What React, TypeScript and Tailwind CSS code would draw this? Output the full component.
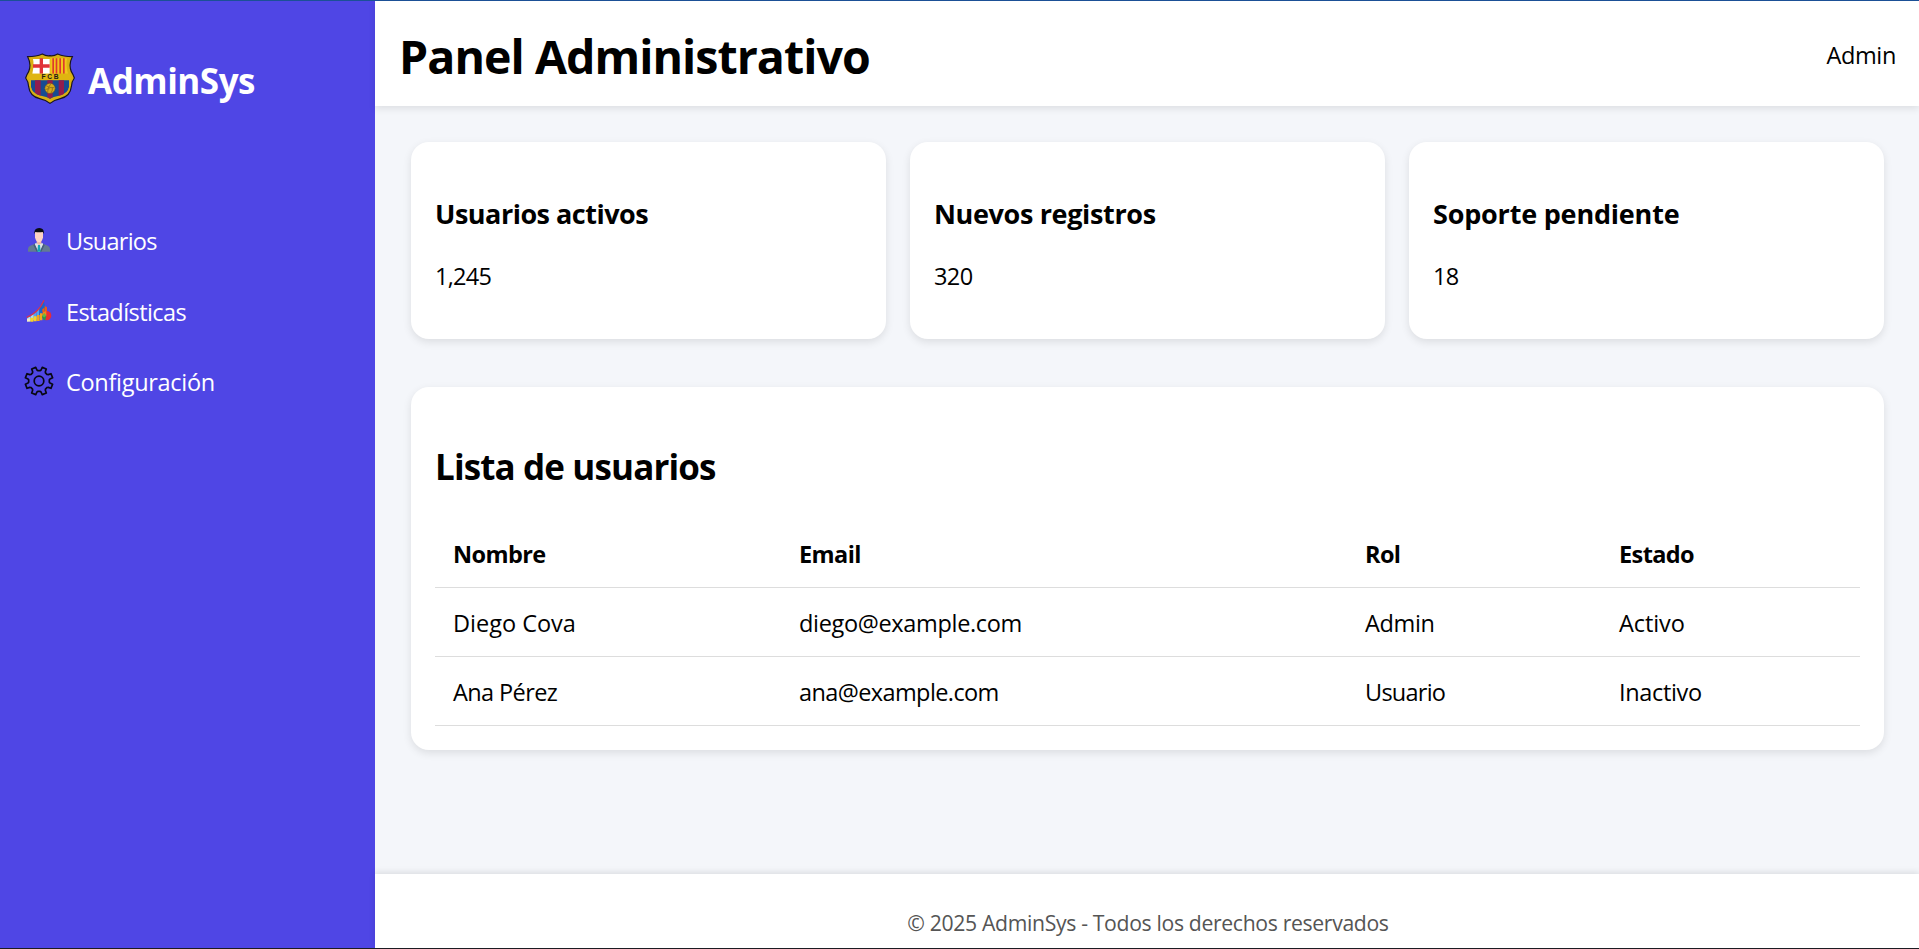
import type { ReactNode } from "react";

function Crest() {
  return (
    <svg viewBox="30 26 150 153" className="h-[51px] w-[50px] shrink-0">
      <defs>
        <clipPath id="crest-body">
          <path d="M48 43 Q66 42 83 35 Q94 42 105 41 Q116 42 127 35 Q144 42 162 43 Q153 62 163 84 Q170 92 172 101 Q164 112 163 126 Q160 151 132 158 Q115 162 105 170 Q95 162 78 158 Q50 151 47 126 Q46 112 38 101 Q40 92 47 84 Q57 62 48 43Z" />
        </clipPath>
      </defs>
      <path
        d="M38 37 Q64 37 82 29 Q94 36 105 34 Q116 36 128 29 Q146 37 172 37 Q160 60 169 82 Q175 91 178 101 Q169 113 169 127 Q166 156 136 163 Q117 167 105 177 Q93 167 74 163 Q44 156 41 127 Q41 113 32 101 Q35 91 41 82 Q50 60 38 37Z"
        fill="#d9b012"
        stroke="#1a1522"
        strokeWidth="3.5"
      />
      <g clipPath="url(#crest-body)">
        <path d="M54 44 H104 V88 H52 Q58 62 54 44Z" fill="#ffffff" />
        <path d="M74 42h10v46H74z M54 60h50v10H54z" fill="#e03238" />
        <path d="M106 42h50q-4 22 3 46h-53z" fill="#f2c51c" />
        <path d="M112 42h5v46h-5z M122 42h5v46h-5z M133 42h5v46h-5z M144 42h5v46h-5z" fill="#de3a2c" />
        <path d="M48 108h114v20q-3 20-30 26-18 3-27 9-9-6-27-9-27-6-30-26z" fill="#174b93" />
        <path d="M60 108h17v46q-12-3-17-9z M97 108h16v50l-8 5-8-5z M131 108h16v40q-5 4-16 6z" fill="#931c4d" />
      </g>
      <path d="M47 88H163L170 101 164 107H46L40 101Z" fill="#dfb510" />
      <text x="107.500" y="105" textAnchor="middle" fontSize="20" fontWeight="700" letterSpacing="5" fill="#1b1a18" className="font-['Liberation_Sans',sans-serif]">
        FCB
      </text>
      <circle cx="105" cy="132" r="15.500" fill="#d7a91b" stroke="#5b4a25" strokeWidth="1.500" />
      <path d="M93 124q10 8 24 6 M98 144q-1-14 9-25 M108 146q6-9 4-16 M92 135l12-2" fill="none" stroke="#7e6016" strokeWidth="2" />
    </svg>
  );
}

function PersonIcon() {
  return (
    <svg viewBox="27 30 90 90" className="size-[30px] shrink-0">
      <path d="M39 110V103q0-9 10-12l15-6h16l15 6q10 3 10 12v7z" fill="#637b93" />
      <path d="M61 85h22l3 5-11 20h-6L58 90z" fill="#dfe4ea" />
      <path d="M59 86l-4 4 10 20h5z M85 86l4 4-10 20h-5z" fill="#465d78" />
      <path d="M69 90h6l2 20H67z" fill="#14a5b5" />
      <path d="M65 74h14v10l-7 7-7-7z" fill="#efb9a8" />
      <path d="M60 48h24v19q-2 14-12 15-10-1-12-15z" fill="#fdd3c5" />
      <path d="M58 57q-1-12 6-16 9-4 17 0 7 4 5 16l-3-6q-11 2-22 0z" fill="#090b12" />
    </svg>
  );
}

function ChartIcon() {
  return (
    <svg viewBox="27 30 90 90" className="size-[30px] shrink-0">
      <path d="M37 96l10-5v13l-10 2z M48 89l8-5v18l-8 3z" fill="#a9e2ef" />
      <path d="M57 83l8-7v24l-8 3z M66 75l7-9v32l-7 3z" fill="#53a4ed" />
      <path d="M73 66l7-12v42h-7z M80 54l7-10 4 24v26H80z" fill="#1965cf" />
      <path d="M35 94Q72 80 87 43" fill="none" stroke="#d7334d" strokeWidth="4" />
      <path d="M36 98h10v9H36z" fill="#f1ecc4" />
      <path d="M46 95h9v12h-9z M56 91h9v15h-9z" fill="#f9d425" />
      <path d="M66 87h8v18h-8z M75 82h7v21h-7z" fill="#f3a51b" />
      <path d="M82 70l6-5v14h-6z M89 60l7 4v22h-7z" fill="#ef5d12" />
      <circle cx="95" cy="89" r="14" fill="#e72c38" />
      <path d="M94 89V75q-13 1-13 14z" fill="#f28a17" />
      <path d="M94 89H81q1 12 10 14z" fill="#289b4c" />
      <path d="M94 89l-6-8-7 9 7 4z" fill="#65b941" />
    </svg>
  );
}

function gearPath(): string {
  const points: string[] = [];
  const add = (radius: number, degrees: number) => {
    const a = (degrees * Math.PI) / 180;
    points.push(`${(15 + radius * Math.sin(a)).toFixed(2)} ${(15 - radius * Math.cos(a)).toFixed(2)}`);
  };
  for (let k = 0; k < 8; k++) {
    const c = 22.5 + 45 * k;
    add(10.4, c - 16);
    add(11.2, c - 12);
    add(14, c - 9);
    add(14, c + 9);
    add(11.2, c + 12);
    add(10.4, c + 16);
  }
  return `M${points.join("L")}Z`;
}

function GearIcon() {
  return (
    <svg viewBox="0 0 30 30" fill="none" stroke="#080812" strokeWidth="1.7" strokeLinejoin="round" className="size-[30px] shrink-0">
      <path d={gearPath()} />
      <circle cx="15" cy="15" r="4.800" />
    </svg>
  );
}

function NavItem({ icon, label, tracking }: { icon: ReactNode; label: string; tracking: string }) {
  return (
    <li className="flex h-[30px] items-center gap-3">
      {icon}
      <a className={`pt-0.5 ${tracking}`}>{label}</a>
    </li>
  );
}

const stats = [
  { title: "Usuarios activos", value: "1,245", titleTracking: "tracking-[-0.5px]", valueTracking: "tracking-[-0.75px]" },
  { title: "Nuevos registros", value: "320", titleTracking: "tracking-[-0.35px]", valueTracking: "tracking-[-0.6px]" },
  { title: "Soporte pendiente", value: "18", titleTracking: "tracking-[-0.2px]", valueTracking: "tracking-[-0.6px]" },
];

const users = [
  [
    { text: "Diego Cova", tracking: "tracking-[0px]" },
    { text: "diego@example.com", tracking: "tracking-[-0.33px]" },
    { text: "Admin", tracking: "tracking-[-0.35px]" },
    { text: "Activo", tracking: "tracking-[-0.1px]" },
  ],
  [
    { text: "Ana Pérez", tracking: "tracking-[-0.6px]" },
    { text: "ana@example.com", tracking: "tracking-[-0.6px]" },
    { text: "Usuario", tracking: "tracking-[-0.75px]" },
    { text: "Inactivo", tracking: "tracking-[-0.35px]" },
  ],
];

export default function App() {
  return (
    <div className="flex h-[949px] w-full overflow-hidden border-t border-b border-t-[#1b5096] border-b-[#1c1c22] bg-[#f4f6fa] font-['Open_Sans','Noto_Sans',sans-serif] text-[23.5px] leading-8 text-black">
      <aside className="w-[375px] shrink-0 bg-[#4f46e5] px-6 text-white">
        <div className="flex h-[103px] items-start gap-[13px] pt-[52px] pl-px">
          <Crest />
          <h2 className="pt-1 text-[35px] leading-[48px] font-bold tracking-[-0.5px]">AdminSys</h2>
        </div>
        <ul className="flex flex-col gap-[40.500px] pt-[121px]">
          <NavItem icon={<PersonIcon />} label="Usuarios" tracking="tracking-[-0.75px]" />
          <NavItem icon={<ChartIcon />} label="Estadísticas" tracking="tracking-[-0.58px]" />
          <NavItem icon={<GearIcon />} label="Configuración" tracking="tracking-[-0.3px]" />
        </ul>
      </aside>

      <div className="flex min-w-0 flex-1 flex-col">
        <header className="flex h-[105px] shrink-0 items-center justify-between bg-white pr-[23px] pl-6 shadow-[0_3px_7px_rgba(0,0,0,0.09)]">
          <h1 className="pt-1 text-[46.5px] leading-[64px] font-bold tracking-[-0.95px]">Panel Administrativo</h1>
          <span className="pt-0.5 tracking-[-0.35px]">Admin</span>
        </header>

        <main className="flex-1 pt-9 pr-[35px] pl-9">
          <section className="grid grid-cols-3 gap-6">
            {stats.map((s) => (
              <div key={s.title} className="h-[197px] rounded-[18px] bg-white px-6 pt-[53px] shadow-[0_3px_9px_rgba(0,0,0,0.1)]">
                <h3 className={`text-[27px] leading-[38px] font-bold ${s.titleTracking}`}>{s.title}</h3>
                <p className={`mt-[27px] ${s.valueTracking}`}>{s.value}</p>
              </div>
            ))}
          </section>

          <section className="mt-12 h-[363px] rounded-[18px] bg-white px-6 pt-[56px] shadow-[0_3px_9px_rgba(0,0,0,0.1)]">
            <h2 className="text-[35px] leading-[48px] font-bold tracking-[-0.87px]">Lista de usuarios</h2>
            <table className="mt-7 w-full table-fixed border-separate border-spacing-0 text-left">
              <colgroup>
                <col className="w-[346px]" />
                <col className="w-[566px]" />
                <col className="w-[254px]" />
                <col />
              </colgroup>
              <thead>
                <tr>
                  {["Nombre", "Email", "Rol", "Estado"].map((h) => (
                    <th key={h} className="h-[69px] border-b border-[#dddddd] px-[18px] pt-[2px] font-bold tracking-[-0.6px]">
                      {h}
                    </th>
                  ))}
                </tr>
              </thead>
              <tbody>
                {users.map((row) => (
                  <tr key={row[0].text}>
                    {row.map((cell) => (
                      <td key={cell.text} className={`h-[69px] border-b border-[#dddddd] px-[18px] pt-[2px] ${cell.tracking}`}>
                        {cell.text}
                      </td>
                    ))}
                  </tr>
                ))}
              </tbody>
            </table>
          </section>
        </main>

        <footer className="h-[74px] shrink-0 bg-white pt-[34px] pl-0.5 text-center text-[21.2px] leading-[30px] tracking-[-0.34px] text-[#555555] shadow-[0_-2px_6px_rgba(0,0,0,0.1)]">
          © 2025 AdminSys - Todos los derechos reservados
        </footer>
      </div>
    </div>
  );
}
